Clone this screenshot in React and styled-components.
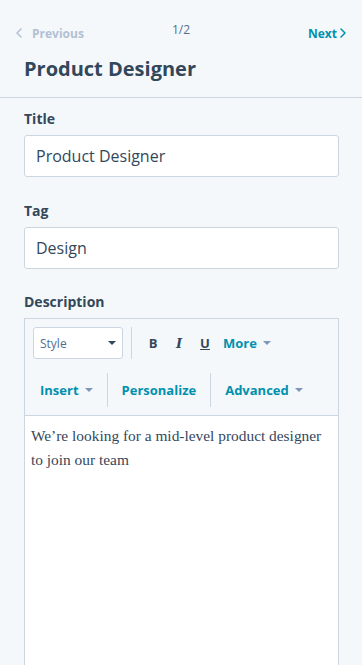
import React from "react";
import styled, { createGlobalStyle } from "styled-components";

const GlobalStyle = createGlobalStyle`
  html, body {
    margin: 0;
    padding: 0;
    background: #f5f8fa;
  }
  body {
    font-family: "Open Sans", "Noto Sans", sans-serif;
    color: #33475b;
  }
  * { box-sizing: border-box; }
`;

const Page = styled.div`
  width: 362px;
  height: 665px;
  overflow: hidden;
  background: #f5f8fa;
`;

const Header = styled.div`
  padding: 18px 16px 15px 24px;
  border-bottom: 1px solid #cbd6e2;
`;

const Pager = styled.div`
  display: grid;
  grid-template-columns: 1fr auto 1fr;
  align-items: center;
  margin-left: -8px;
  height: 30px;
`;

const PagerLink = styled.span`
  display: flex;
  align-items: center;
  gap: ${p => (p.right ? 3 : 10)}px;
  font-size: 12px;
  font-weight: 700;
  color: ${p => (p.disabled ? "#b0c1d4" : "#0091ae")};
  justify-self: ${p => (p.right ? "end" : "start")};
`;

const PageCount = styled.span`
  font-size: 12px;
  color: #516f90;
  margin-top: -8px;
`;

const Heading = styled.h1`
  margin: 8px 0 0;
  font-size: 20px;
  font-weight: 700;
  line-height: 26px;
  color: #33475b;
`;

const Form = styled.div`
  padding: 12px 23px 0 24px;
`;

const Field = styled.div`
  margin-bottom: ${p => p.gap || 24}px;
`;

const Label = styled.div`
  font-size: 14px;
  font-weight: 700;
  line-height: 18px;
  margin-bottom: 7px;
  color: #33475b;
`;

const Input = styled.div`
  height: 42px;
  background: #fff;
  border: 1px solid #cbd6e2;
  border-radius: 3px;
  padding: 0 11px;
  display: flex;
  align-items: center;
  font-size: 16px;
  color: #33475b;
`;

const Editor = styled.div`
  border: 1px solid #cbd6e2;
  border-bottom: none;
  height: 360px;
  display: flex;
  flex-direction: column;
`;

const Toolbar = styled.div`
  background: #f5f8fa;
  border-bottom: 1px solid #cbd6e2;
  padding: 8px 0 8px 8px;
  display: flex;
  flex-direction: column;
  gap: 14px;
`;

const ToolRow = styled.div`
  display: flex;
  align-items: center;
  height: ${p => p.h}px;
`;

const Select = styled.div`
  width: 90px;
  height: 32px;
  background: #fff;
  border: 1px solid #cbd6e2;
  border-radius: 3px;
  display: flex;
  align-items: center;
  justify-content: space-between;
  padding: 0 6px 0 6px;
  font-size: 12px;
  color: #516f90;
`;

const Sep = styled.div`
  width: 1px;
  align-self: stretch;
  background: #cbd6e2;
  margin: 0 ${p => p.m || 14}px;
`;

const FormatBtn = styled.span`
  width: 26px;
  text-align: center;
  font-size: 13px;
  font-weight: 700;
  color: #33475b;
  font-style: ${p => (p.italic ? "italic" : "normal")};
  text-decoration: ${p => (p.underline ? "underline" : "none")};
  font-family: ${p => (p.italic ? '"DejaVu Serif", serif' : "inherit")};
`;

const MenuBtn = styled.span`
  display: flex;
  align-items: center;
  gap: 6px;
  font-size: 13px;
  font-weight: 700;
  color: #0091ae;
  padding-left: ${p => p.pad || 0}px;
`;

const Caret = styled.span`
  width: 0;
  height: 0;
  border-left: 4px solid transparent;
  border-right: 4px solid transparent;
  border-top: 4px solid ${p => p.color || "#7c98b6"};
`;

const Content = styled.div`
  flex: 1;
  background: #fff;
  padding: 8px 12px 8px 6px;
  font-family: "Liberation Serif", "DejaVu Serif", serif;
  font-size: 15.4px;
  line-height: 24px;
  color: #33475b;
`;

const Chevron = ({ dir, color }) => (
  <svg width="6" height="10" viewBox="0 0 6 10" fill="none">
    <path
      d={dir === "left" ? "M5 1L1 5l4 4" : "M1 1l4 4-4 4"}
      stroke={color}
      strokeWidth="1.5"
      strokeLinecap="round"
      strokeLinejoin="round"
    />
  </svg>
);

export default function App() {
  return (
    <Page>
      <GlobalStyle />
      <Header>
        <Pager>
          <PagerLink disabled>
            <Chevron dir="left" color="#b0c1d4" />
            Previous
          </PagerLink>
          <PageCount>1/2</PageCount>
          <PagerLink right>
            Next
            <Chevron dir="right" color="#0091ae" />
          </PagerLink>
        </Pager>
        <Heading>Product Designer</Heading>
      </Header>
      <Form>
        <Field gap={25}>
          <Label>Title</Label>
          <Input>Product Designer</Input>
        </Field>
        <Field>
          <Label>Tag</Label>
          <Input>Design</Input>
        </Field>
        <Field>
          <Label>Description</Label>
          <Editor>
            <Toolbar>
              <ToolRow h={32}>
                <Select>
                  Style
                  <Caret color="#33475b" />
                </Select>
                <Sep m={8} />
                <FormatBtn>B</FormatBtn>
                <FormatBtn italic>I</FormatBtn>
                <FormatBtn underline>U</FormatBtn>
                <MenuBtn pad={5}>
                  More
                  <Caret />
                </MenuBtn>
              </ToolRow>
              <ToolRow h={34}>
                <MenuBtn pad={7}>
                  Insert
                  <Caret />
                </MenuBtn>
                <Sep />
                <MenuBtn>Personalize</MenuBtn>
                <Sep />
                <MenuBtn>
                  Advanced
                  <Caret />
                </MenuBtn>
              </ToolRow>
            </Toolbar>
            <Content>
              We’re looking for a mid-level product designer to join our team
            </Content>
          </Editor>
        </Field>
      </Form>
    </Page>
  );
}
